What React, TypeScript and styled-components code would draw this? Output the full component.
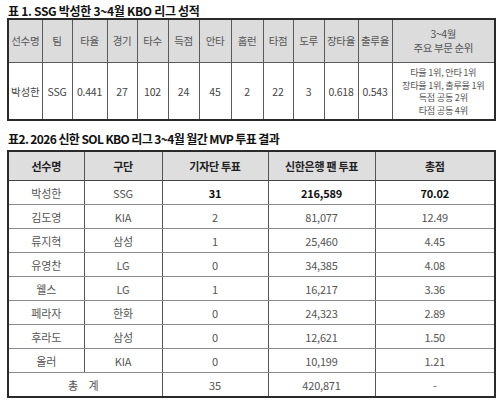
import React from 'react';
import styled, { createGlobalStyle } from 'styled-components';

const Global = createGlobalStyle`
body {
  margin: 0;
  background: #fff;
  font-family: "Noto Sans CJK KR", "Noto Sans", sans-serif;
}
`;

const Page = styled.div`
  width: 500px;
  height: 405px;
  padding: 4px 6px 0 7px;
  box-sizing: border-box;
  display: flex;
  flex-direction: column;
`;

const Caption = styled.div<{ $top?: number }>`
  font-size: 12px;
  font-weight: 700;
  color: #111;
  line-height: 14px;
  letter-spacing: ${p => (p.$top ? '-0.6px' : '-0.3px')};
  margin-top: ${p => p.$top || 0}px;
  margin-bottom: ${p => (p.$top ? 4 : 0)}px;
  padding-left: 1px;
`;

const Table = styled.table`
  width: 487px;
  table-layout: fixed;
  border-collapse: collapse;
  border: 2px solid #2a2a2a;
`;

const Col = styled.col<{ $w: number }>`
  width: ${p => p.$w}px;
`;

const StatHead = styled.th`
  background: #dcdcdc;
  height: 42px;
  border: 1px solid #5a5a5a;
  font-size: 10.5px;
  font-weight: 400;
  color: #555;
  padding: 0;
  line-height: 14px;
  letter-spacing: -0.4px;
`;

const StatCell = styled.td`
  height: 56px;
  border: 1px solid #5a5a5a;
  font-size: 10.5px;
  color: #444;
  text-align: center;
  padding: 0;
  letter-spacing: -0.2px;
`;

const RankCell = styled(StatCell)`
  font-size: 9.2px;
  line-height: 12.5px;
  color: #555;
  letter-spacing: -0.3px;
`;

const VoteHead = styled.th`
  background: #dedede;
  height: 28px;
  border: 1px solid #555;
  border-bottom: 1px solid #444;
  font-size: 11px;
  font-weight: 700;
  color: #222;
  padding: 0;
  letter-spacing: -0.3px;
`;

const VoteCell = styled.td<{ $bold?: boolean; $spread?: boolean }>`
  height: 23px;
  border-left: 1px solid #555;
  border-right: 1px solid #555;
  border-bottom: 1px solid #8a8a8a;
  font-size: 11px;
  font-weight: ${p => (p.$bold ? 700 : 400)};
  color: ${p => (p.$bold ? '#111' : '#555')};
  text-align: center;
  padding: 0;
  letter-spacing: ${p => (p.$spread ? '4px' : '-0.2px')};
`;

const statCols = [34, 30, 35, 30, 31, 31, 32, 32, 30, 31, 34, 34, 103];
const statHeads = ['선수명', '팀', '타율', '경기', '타수', '득점', '안타', '홈런', '타점', '도루', '장타율', '출루율'];
const statRow = ['박성한', 'SSG', '0.441', '27', '102', '24', '45', '2', '22', '3', '0.618', '0.543'];

const voteCols = [76, 78, 106, 107, 120];
const voteHeads = ['선수명', '구단', '기자단 투표', '신한은행 팬 투표', '총점'];
const votes = [
  ['박성한', 'SSG', '31', '216,589', '70.02'],
  ['김도영', 'KIA', '2', '81,077', '12.49'],
  ['류지혁', '삼성', '1', '25,460', '4.45'],
  ['유영찬', 'LG', '0', '34,385', '4.08'],
  ['웰스', 'LG', '1', '16,217', '3.36'],
  ['페라자', '한화', '0', '24,323', '2.89'],
  ['후라도', '삼성', '0', '12,621', '1.50'],
  ['올러', 'KIA', '0', '10,199', '1.21'],
];

export default function App() {
  return (
    <Page>
      <Global />
      <Caption>표 1. SSG 박성한 3~4월 KBO 리그 성적</Caption>
      <Table>
        <colgroup>
          {statCols.map((w, i) => <Col key={`sc-${i}`} $w={w} />)}
        </colgroup>
        <thead>
          <tr>
            {statHeads.map(h => <StatHead key={h}>{h}</StatHead>)}
            <StatHead>3~4월<br />주요 부문 순위</StatHead>
          </tr>
        </thead>
        <tbody>
          <tr>
            {statRow.map((v, i) => <StatCell key={`sr-${i}`}>{v}</StatCell>)}
            <RankCell>
              타율 1위, 안타 1위<br />
              장타율 1위, 출루율 1위<br />
              득점 공동 2위<br />
              타점 공동 4위
            </RankCell>
          </tr>
        </tbody>
      </Table>

      <Caption $top={11}>표2. 2026 신한 SOL KBO 리그 3~4월 월간 MVP 투표 결과</Caption>
      <Table>
        <colgroup>
          {voteCols.map((w, i) => <Col key={`vc-${i}`} $w={w} />)}
        </colgroup>
        <thead>
          <tr>
            {voteHeads.map(h => <VoteHead key={h}>{h}</VoteHead>)}
          </tr>
        </thead>
        <tbody>
          {votes.map((row, r) => (
            <tr key={row[0]}>
              {row.map((v, i) => (
                <VoteCell key={`v-${r}-${i}`} $bold={r === 0 && i >= 2}>{v}</VoteCell>
              ))}
            </tr>
          ))}
          <tr>
            <VoteCell colSpan={2} $spread>총 계</VoteCell>
            <VoteCell>35</VoteCell>
            <VoteCell>420,871</VoteCell>
            <VoteCell>-</VoteCell>
          </tr>
        </tbody>
      </Table>
    </Page>
  );
}
